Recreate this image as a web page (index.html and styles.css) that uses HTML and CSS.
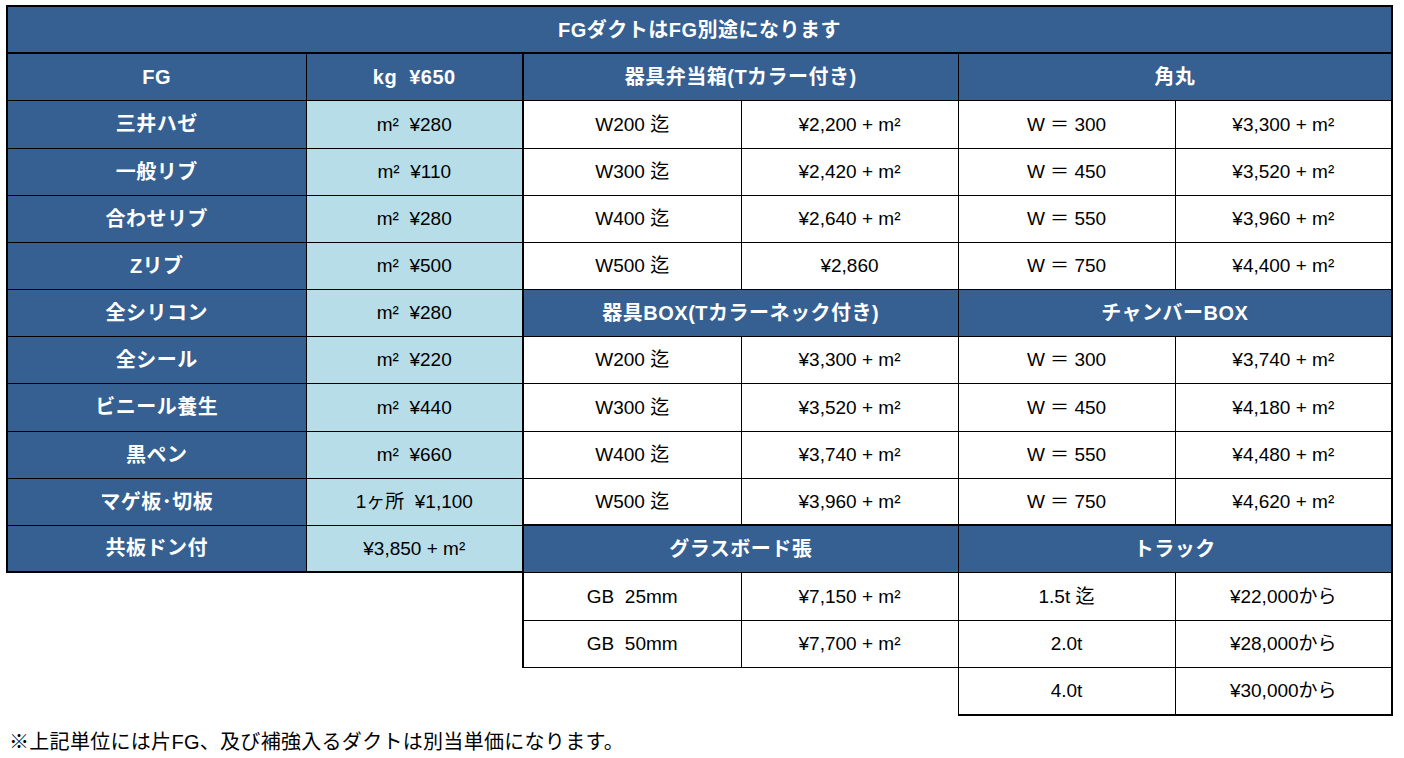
FILE: index.html
```html
<!DOCTYPE html>
<html lang="ja">
<head>
<meta charset="utf-8">
<title>FGダクト 単価表</title>
<link rel="stylesheet" href="styles.css">
</head>
<body>
<div class="page">
<table class="price">
<colgroup>
<col class="c1"><col class="c2"><col class="c3"><col class="c4"><col class="c5"><col class="c6">
</colgroup>
<tbody>
<tr class="h47">
<th colspan="6" class="hd title lft rgt">FGダクトはFG別途になります</th>
</tr>
<tr class="h47">
<th class="hd lft">FG</th>
<th class="hd thickr">kg&nbsp;&nbsp;¥650</th>
<th class="hd" colspan="2">器具弁当箱(Tカラー付き)</th>
<th class="hd rgt" colspan="2">角丸</th>
</tr>
<tr class="h48">
<th class="hd lft">三井ハゼ</th>
<td class="lb thickr">m²&nbsp;&nbsp;¥280</td>
<td>W200 迄</td><td>¥2,200 + m²</td>
<td>W ＝ 300</td><td class="rgt">¥3,300 + m²</td>
</tr>
<tr class="h47">
<th class="hd lft">一般リブ</th>
<td class="lb thickr">m²&nbsp;&nbsp;¥110</td>
<td>W300 迄</td><td>¥2,420 + m²</td>
<td>W ＝ 450</td><td class="rgt">¥3,520 + m²</td>
</tr>
<tr class="h47">
<th class="hd lft">合わせリブ</th>
<td class="lb thickr">m²&nbsp;&nbsp;¥280</td>
<td>W400 迄</td><td>¥2,640 + m²</td>
<td>W ＝ 550</td><td class="rgt">¥3,960 + m²</td>
</tr>
<tr class="h47">
<th class="hd lft">Zリブ</th>
<td class="lb thickr">m²&nbsp;&nbsp;¥500</td>
<td>W500 迄</td><td>¥2,860</td>
<td>W ＝ 750</td><td class="rgt">¥4,400 + m²</td>
</tr>
<tr class="h47">
<th class="hd lft">全シリコン</th>
<td class="lb thickr">m²&nbsp;&nbsp;¥280</td>
<th class="hd" colspan="2">器具BOX(Tカラーネック付き)</th>
<th class="hd rgt" colspan="2">チャンバーBOX</th>
</tr>
<tr class="h47">
<th class="hd lft">全シール</th>
<td class="lb thickr">m²&nbsp;&nbsp;¥220</td>
<td>W200 迄</td><td>¥3,300 + m²</td>
<td>W ＝ 300</td><td class="rgt">¥3,740 + m²</td>
</tr>
<tr class="h48">
<th class="hd lft">ビニール養生</th>
<td class="lb thickr">m²&nbsp;&nbsp;¥440</td>
<td>W300 迄</td><td>¥3,520 + m²</td>
<td>W ＝ 450</td><td class="rgt">¥4,180 + m²</td>
</tr>
<tr class="h47">
<th class="hd lft">黒ペン</th>
<td class="lb thickr">m²&nbsp;&nbsp;¥660</td>
<td>W400 迄</td><td>¥3,740 + m²</td>
<td>W ＝ 550</td><td class="rgt">¥4,480 + m²</td>
</tr>
<tr class="h47">
<th class="hd lft">マゲ板･切板</th>
<td class="lb thickr">1ヶ所&nbsp;&nbsp;¥1,100</td>
<td class="thickb">W500 迄</td><td class="thickb">¥3,960 + m²</td>
<td class="thickb">W ＝ 750</td><td class="thickb rgt">¥4,620 + m²</td>
</tr>
<tr class="h47">
<th class="hd lft thickb">共板ドン付</th>
<td class="lb thickr thickb">¥3,850 + m²</td>
<th class="hd" colspan="2">グラスボード張</th>
<th class="hd rgt" colspan="2">トラック</th>
</tr>
<tr class="h48">
<td class="void" colspan="2"></td>
<td class="thickl">GB&nbsp;&nbsp;25mm</td><td>¥7,150 + m²</td>
<td>1.5t 迄</td><td class="rgt">¥22,000から</td>
</tr>
<tr class="h47">
<td class="void" colspan="2"></td>
<td class="thickl">GB&nbsp;&nbsp;50mm</td><td>¥7,700 + m²</td>
<td>2.0t</td><td class="rgt">¥28,000から</td>
</tr>
<tr class="h48">
<td class="void" colspan="4"></td>
<td class="thickb">4.0t</td><td class="rgt thickb">¥30,000から</td>
</tr>
</tbody>
</table>
<p class="note">※上記単位には片FG、及び補強入るダクトは別当単価になります。</p>
</div>
</body>
</html>
```

FILE: styles.css
```css
html, body {
  margin: 0;
  padding: 0;
  background: #ffffff;
}

.page {
  padding: 5px 0 0 6px;
  font-family: "Liberation Sans", "Noto Sans CJK JP", sans-serif;
  color: #000000;
}

.price {
  border-collapse: collapse;
  table-layout: fixed;
  width: 1385px;
  font-size: 19px;
}

.c1 { width: 299px; }
.c2 { width: 217px; }
.c3 { width: 218px; }
.c4 { width: 217px; }
.c5 { width: 217px; }
.c6 { width: 217px; }

.h47 { height: 47px; }
.h48 { height: 48px; }

.price th,
.price td {
  border: 1px solid #000000;
  padding: 0;
  text-align: center;
  vertical-align: middle;
  white-space: pre;
  font-weight: 400;
  line-height: 1;
}

.price .hd {
  background: #366092;
  color: #ffffff;
  font-weight: 700;
  font-size: 20px;
  letter-spacing: 0.5px;
}

.price .title {
  border-top: 2px solid #000000;
  border-bottom: 2px solid #000000;
}

.price .lb {
  background: #b7dee8;
}

.price .lft { border-left: 2px solid #000000; }
.price .rgt { border-right: 2px solid #000000; }
.price .thickr { border-right: 2px solid #000000; }
.price .thickl { border-left: 2px solid #000000; }
.price .thickb { border-bottom: 2px solid #000000; }

.price .void {
  border: none;
  background: #ffffff;
}

.note {
  margin: 14px 0 0 3px;
  font-size: 20px;
  line-height: 24px;
  font-weight: 400;
  letter-spacing: 0.3px;
}
```
